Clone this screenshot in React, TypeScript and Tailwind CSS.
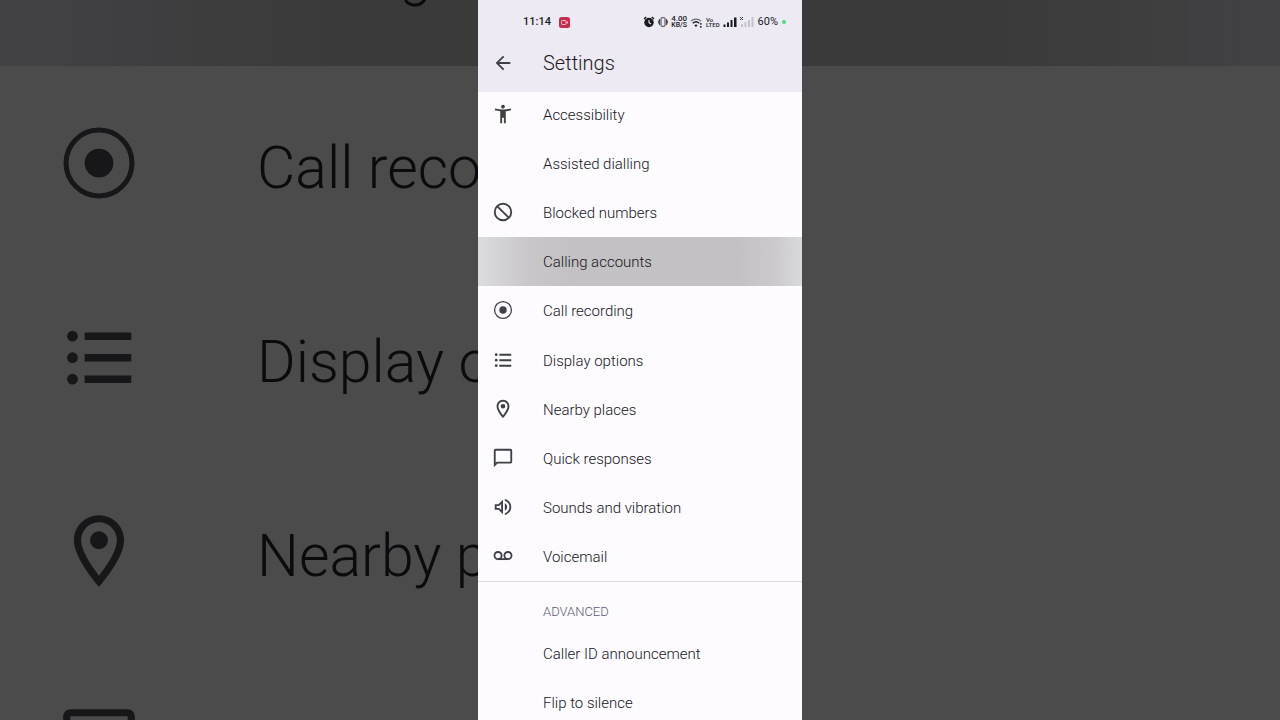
import type { ReactNode } from 'react'

type Row = { label: string, icon?: ReactNode, active?: boolean }

const accessibility = (
  <path fill="currentColor" d="M20.5 6c-2.61.7-5.67 1-8.5 1s-5.89-.3-8.5-1L3 8c1.86.5 4 .83 6 1v13h2v-6h2v6h2V9c2-.17 4.14-.5 6-1l-.5-2zM12 6c1.1 0 2-.9 2-2s-.9-2-2-2-2 .9-2 2 .9 2 2 2z" />
)
const block = (
  <g fill="none" stroke="currentColor" strokeWidth="2">
    <circle cx="12" cy="12" r="9" />
    <path d="m5.8 5.8 12.4 12.4" />
  </g>
)
const record = (
  <>
    <circle cx="12" cy="12" r="9.2" fill="none" stroke="currentColor" strokeWidth="1.4" />
    <circle cx="12" cy="12" r="4" fill="currentColor" />
  </>
)
const list = (
  <>
    <g fill="currentColor">
      <circle cx="4.6" cy="6.2" r="1.5" />
      <circle cx="4.6" cy="12.2" r="1.5" />
      <circle cx="4.6" cy="18.2" r="1.5" />
    </g>
    <path stroke="currentColor" strokeWidth="2.1" d="M8 6.2h13M8 12.2h13M8 18.2h13" />
  </>
)
const place = (
  <path fill="currentColor" d="M12 2C8.13 2 5 5.13 5 9c0 5.25 7 13 7 13s7-7.75 7-13c0-3.87-3.13-7-7-7zM7 9c0-2.76 2.24-5 5-5s5 2.24 5 5c0 2.88-2.88 7.19-5 9.88C9.92 16.21 7 11.85 7 9zm5-2.5a2.5 2.5 0 1 0 0 5 2.5 2.5 0 0 0 0-5z" />
)
const chat = (
  <path fill="currentColor" d="M20 2H4c-1.1 0-2 .9-2 2v18l4-4h14c1.1 0 2-.9 2-2V4c0-1.1-.9-2-2-2zm0 14H5.17L4 17.17V4h16v12z" />
)
const volume = (
  <path fill="currentColor" d="M3 9v6h4l5 5V4L7 9H3zm7-.17v6.34L7.83 13H5v-2h2.83L10 8.83zM16.5 12c0-1.77-1.02-3.29-2.5-4.03v8.05c1.48-.73 2.5-2.25 2.5-4.02zM14 3.23v2.06c2.89.86 5 3.54 5 6.71s-2.11 5.85-5 6.71v2.06c4.01-.91 7-4.49 7-8.77s-2.99-7.86-7-8.77z" />
)
const voicemail = (
  <g fill="none" stroke="currentColor" strokeWidth="2">
    <circle cx="6.6" cy="11.5" r="3.9" />
    <circle cx="17.4" cy="11.5" r="3.9" />
    <path d="M6.6 15.4h10.8" />
  </g>
)

const rows: Row[] = [
  { label: 'Accessibility', icon: accessibility },
  { label: 'Assisted dialling' },
  { label: 'Blocked numbers', icon: block },
  { label: 'Calling accounts', active: true },
  { label: 'Call recording', icon: record },
  { label: 'Display options', icon: list },
  { label: 'Nearby places', icon: place },
  { label: 'Quick responses', icon: chat },
  { label: 'Sounds and vibration', icon: volume },
  { label: 'Voicemail', icon: voicemail },
]

const advancedRows: Row[] = [
  { label: 'Caller ID announcement' },
  { label: 'Flip to silence' },
]

function SettingRow({ label, icon, active }: Row) {
  return (
    <li className={active ? 'bg-[linear-gradient(to_right,#dcdbde,#c9c7ca_15%,#c3c1c4_30%,#c3c1c4_80%,#cccacd_92%,#dad9dc)]' : ''}>
      <button type="button" className="flex h-full w-full items-center gap-[29px] px-3.5 text-left">
        <svg viewBox="0 0 24 24" className="size-[22px] shrink-0 text-[#3f3f46]" aria-hidden="true">{icon}</svg>
        <span className="pt-0.5 text-[15px] leading-5 font-[350] text-[#17161a]">{label}</span>
      </button>
    </li>
  )
}

function StatusBar() {
  return (
    <div className="flex h-11 items-center pr-4 pl-[45px] text-[11px] text-[#1b1b1f]">
      <span className="font-medium">11:14</span>
      <svg viewBox="0 0 11 11" className="ml-2 size-[11px]" aria-hidden="true">
        <rect width="11" height="11" rx="2.5" fill="#c9294f" />
        <rect x="2.5" y="3.5" width="4.5" height="4" rx=".8" fill="none" stroke="#f6cfd8" strokeWidth=".9" />
        <path d="M7 5.5 8.8 4v3z" fill="#f6cfd8" />
      </svg>
      <div className="ml-auto flex items-center gap-[3px]">
        <svg viewBox="0 0 24 24" className="size-3" aria-hidden="true">
          <circle cx="12" cy="13" r="9.5" fill="currentColor" />
          <path d="M2 6 6.5 2M22 6l-4.5-4" stroke="currentColor" strokeWidth="3" />
          <path d="M12 8v5.5l4 2.5" fill="none" stroke="#edeaf4" strokeWidth="2.2" />
        </svg>
        <svg viewBox="0 0 20 20" className="size-[10px]" fill="none" stroke="currentColor" strokeWidth="1.6" aria-hidden="true">
          <rect x="6" y="1.5" width="8" height="17" rx="1" />
          <path d="M3 4v12M17 4v12M.8 7v6M19.2 7v6" />
        </svg>
        <span className="flex flex-col items-center text-[7px] leading-[6px] font-medium">
          <span className="text-[8px]">4.00</span>
          <span>KB/S</span>
        </span>
        <svg viewBox="0 0 24 20" className="h-[11px] w-[13px]" fill="none" stroke="currentColor" aria-hidden="true">
          <path d="M1.5 7.5a14 14 0 0 1 19 0" strokeWidth="2" opacity=".6" />
          <path d="M5 11.5a9 9 0 0 1 12 0" strokeWidth="2.6" />
          <path d="m11 18.5-3-3.5a4.5 4.5 0 0 1 6 0z" fill="currentColor" stroke="none" />
          <path d="M20 11v3M20 16.5v3" strokeWidth="2.5" />
        </svg>
        <span className="flex flex-col text-[6px] leading-[5px] font-medium">
          <span>Vo</span>
          <span>LTED</span>
        </span>
        <svg viewBox="0 0 14 10" className="h-[10px] w-3.5" fill="currentColor" aria-hidden="true">
          <path d="M.5 7.5h2V10h-2zM4 5.5h2V10H4zM7.5 3h2v7h-2zM11 .5h2.5V10H11z" />
        </svg>
        <svg viewBox="0 0 14 10" className="mr-px h-[10px] w-3.5" fill="#c5c2cb" aria-hidden="true">
          <path d="M1 7h2v3H1zM4.5 5h2v5h-2zM8 3h2v7H8zM11.5 0h2v10h-2z" />
          <path d="m0 0 3 3m0-3L0 3" stroke="#3b3a40" strokeWidth="1" />
        </svg>
        <span>60%</span>
        <span className="ml-px size-1 rounded-full bg-[#4bd98a]" />
      </div>
    </div>
  )
}

function BackdropRow({ label, icon }: Row) {
  return (
    <div className="flex h-[194px] shrink-0 items-center gap-[115px] pl-14">
      <svg viewBox="0 0 24 24" className="size-[86px] shrink-0 text-[#17171a]">{icon}</svg>
      <span className="pt-2 text-[59px] leading-none font-[350] whitespace-nowrap text-[#0b0b0d]">{label}</span>
    </div>
  )
}

// Enlarged, dimmed copy of the list that fills the space beside the phone
function Backdrop() {
  return (
    <div className="flex min-w-0 flex-col overflow-hidden" aria-hidden="true">
      <div className="flex h-[66px] shrink-0 items-end bg-linear-to-r from-[#424245] to-[#3a3a3a] to-70%">
        <BackdropRow label="Calling accounts" />
      </div>
      <BackdropRow label="Call recording" icon={record} />
      <BackdropRow label="Display options" icon={list} />
      <BackdropRow label="Nearby places" icon={place} />
      <BackdropRow label="Quick responses" icon={chat} />
    </div>
  )
}

export default function App() {
  return (
    <div className="grid h-screen grid-cols-[minmax(0,1fr)_324px_minmax(0,1fr)] overflow-hidden bg-[#4b4b4b] font-[Roboto,sans-serif]">
      <Backdrop />

      <main className="flex min-h-0 flex-col overflow-hidden bg-[#fdfbff]">
        <header className="z-10 shrink-0 bg-[#edeaf4]">
          <StatusBar />
          <div className="flex h-12 items-start gap-[29px] px-3.5 pt-[5px]">
            <button type="button" aria-label="Back" className="py-[3px] text-[#3f3f46]">
              <svg viewBox="0 0 24 24" className="size-[22px]" aria-hidden="true">
                <path fill="currentColor" d="M20 11H7.83l5.59-5.59L12 4l-8 8 8 8 1.41-1.41L7.83 13H20v-2z" />
              </svg>
            </button>
            <h1 className="text-xl leading-7 font-[350] text-[#1d1b20]">Settings</h1>
          </div>
        </header>

        {/* The list is scrolled slightly under the header */}
        <ul className="-mt-[3px] grid min-h-[492px] shrink-0 auto-rows-fr">
          {rows.map((row) => <SettingRow key={row.label} {...row} />)}
        </ul>

        <section className="shrink-0 border-t border-[#dcdae0]">
          <h2 className="pt-5 pb-1.5 pl-[65px] text-[13px] leading-5 font-[350] text-[#5b5d78]">ADVANCED</h2>
          <ul className="grid auto-rows-[49px]">
            {advancedRows.map((row) => <SettingRow key={row.label} {...row} />)}
          </ul>
        </section>
      </main>

      <div className="min-w-0" aria-hidden="true">
        <div className="h-[66px] bg-linear-to-r from-[#3a3a3a] from-40% to-[#424244]" />
      </div>
    </div>
  )
}
